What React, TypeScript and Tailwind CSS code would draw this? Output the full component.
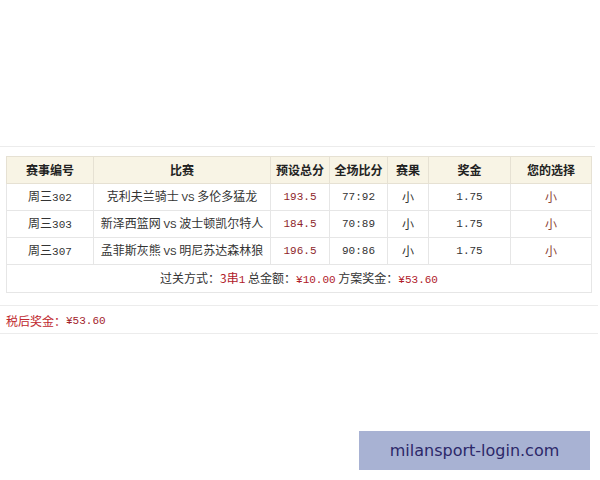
import React from 'react';

type Row = {
  id: string;
  home: string;
  away: string;
  line: string;
  score: string;
  result: string;
  odds: string;
  pick: string;
};

const rows: Row[] = [
  { id: '周三302', home: '克利夫兰骑士', away: '多伦多猛龙', line: '193.5', score: '77:92', result: '小', odds: '1.75', pick: '小' },
  { id: '周三303', home: '新泽西篮网', away: '波士顿凯尔特人', line: '184.5', score: '70:89', result: '小', odds: '1.75', pick: '小' },
  { id: '周三307', home: '孟菲斯灰熊', away: '明尼苏达森林狼', line: '196.5', score: '90:86', result: '小', odds: '1.75', pick: '小' },
];

const cn = "font-['SimSun','Noto_Sans_CJK_SC',sans-serif]";
const mono = "font-['Liberation_Mono','Noto_Sans_CJK_SC',monospace]";

const App: React.FC = () => {
  return (
    <div className={`relative w-[600px] h-[480px] bg-white text-[12px] text-[#333] ${cn}`}>
      <div className="h-[146px]" />

      {/* Result table */}
      <div className="border-t border-[#ececec] mr-[5px] pt-[9px] pl-[6px] pb-[12px] pr-[0px]">
        <table className="w-[585px] border-collapse table-fixed">
          <colgroup>
            <col className="w-[87px]" />
            <col className="w-[177px]" />
            <col className="w-[59px]" />
            <col className="w-[58px]" />
            <col className="w-[41px]" />
            <col className="w-[82px]" />
            <col className="w-[81px]" />
          </colgroup>
          <thead>
            <tr className="h-[27px] bg-[#f8f4e5] font-bold text-[#222]">
              {['赛事编号', '比赛', '预设总分', '全场比分', '赛果', '奖金', '您的选择'].map((h) => (
                <th key={h} className="border border-[#e6e1d3] text-center font-bold">{h}</th>
              ))}
            </tr>
          </thead>
          <tbody>
            {rows.map((r) => (
              <tr key={r.id} className="h-[27px] text-center">
                <td className="border border-[#e6e6e6]">
                  周三<span className={`${mono} text-[11px]`}>{r.id.slice(2)}</span>
                </td>
                <td className="border border-[#e6e6e6]">
                  {r.home} <span className={`${mono} text-[11px]`}>VS</span> {r.away}
                </td>
                <td className={`border border-[#e6e6e6] text-[#8e1f2c] ${mono} text-[11px]`}>{r.line}</td>
                <td className={`border border-[#e6e6e6] ${mono} text-[11px]`}>{r.score}</td>
                <td className="border border-[#e6e6e6]">{r.result}</td>
                <td className={`border border-[#e6e6e6] ${mono} text-[11px]`}>{r.odds}</td>
                <td className="border border-[#e6e6e6] text-[#8c4538]">{r.pick}</td>
              </tr>
            ))}
            <tr className="h-[28px]">
              <td colSpan={7} className="border border-[#e6e6e6] text-center">
                过关方式：<span className="text-[#b0202a]">3串<span className={`${mono} text-[11px]`}>1</span></span>
                {' '}总金额：<span className={`text-[#b0202a] ${mono} text-[11px]`}>¥10.00</span>
                {' '}方案奖金：<span className={`text-[#b0202a] ${mono} text-[11px]`}>¥53.60</span>
              </td>
            </tr>
          </tbody>
        </table>
      </div>

      {/* After-tax prize */}
      <div className="border-t border-b border-[#ececec] mr-[2px] h-[29px] flex items-end pb-[3px] pl-[6px]">
        <span className="text-[#c0282e]">税后奖金：</span>
        <span className={`text-[#a3242c] ${mono} text-[11px] leading-[18px]`}>¥53.60</span>
      </div>

      {/* Watermark */}
      <div className="absolute left-[359px] top-[431px] w-[231px] h-[39px] bg-[#a8b2d3] flex items-center justify-center">
        <span className="font-['DejaVu_Sans',sans-serif] text-[16px] text-[#2c2869]">milansport-login.com</span>
      </div>
    </div>
  );
};

export default App;
